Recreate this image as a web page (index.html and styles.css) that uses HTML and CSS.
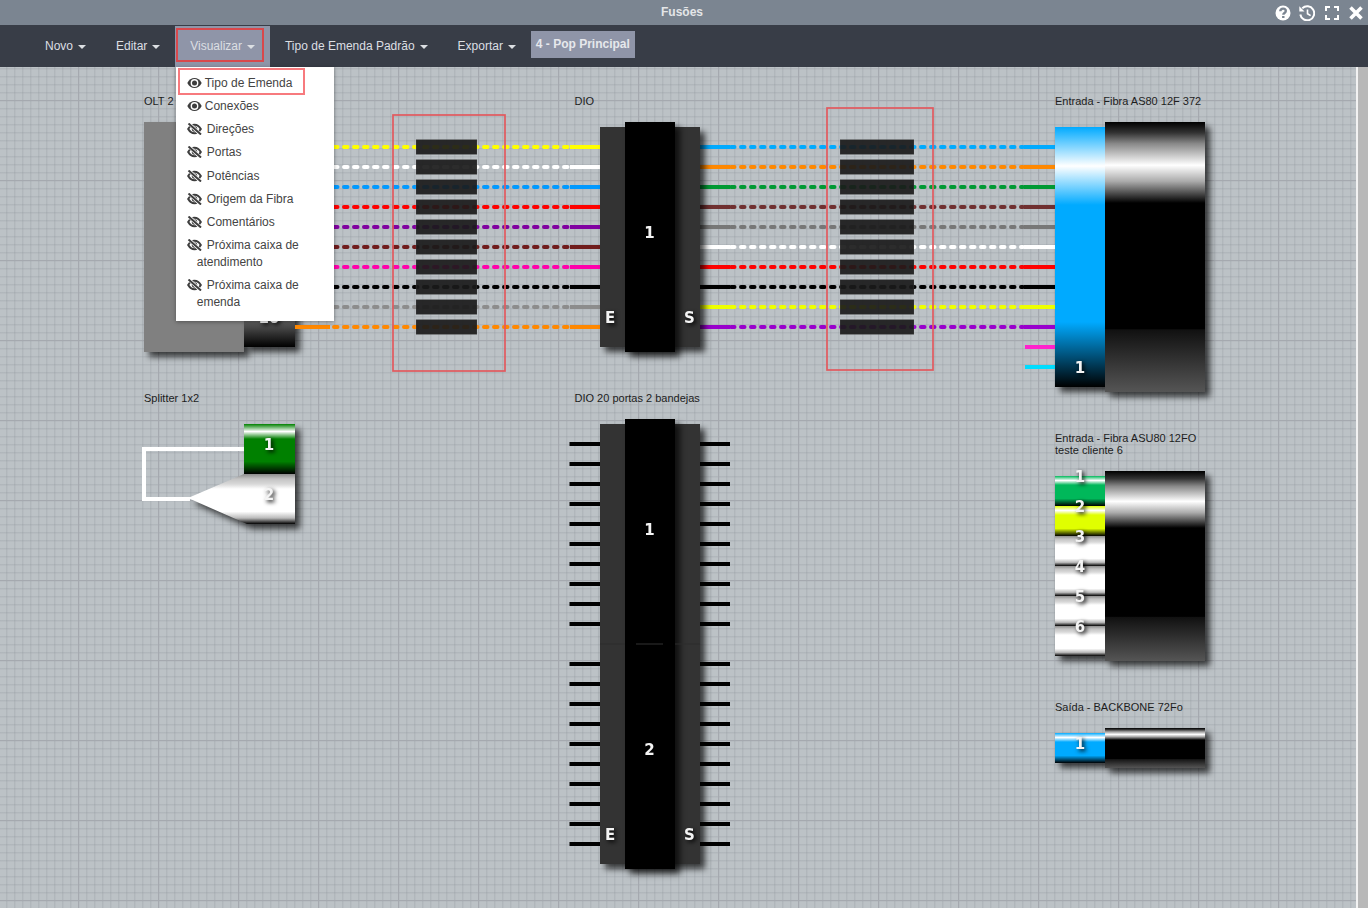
FILE: index.html
```html
<!DOCTYPE html>
<html lang="pt-BR">
<head>
<meta charset="utf-8">
<title>Fusões</title>
<link rel="stylesheet" href="styles.css">
</head>
<body>
<svg class="defs" width="0" height="0" aria-hidden="true">
  <defs>
    <symbol id="i-eye" viewBox="0 0 15 12">
      <path class="ic-fill" d="M.3 6C2 2.8 4.600 1 7.500 1s5.500 1.800 7.200 5c-1.700 3.200-4.300 5-7.200 5S2 9.200.3 6z"/>
      <circle class="ic-white" cx="7.500" cy="6" r="3.900"/>
      <circle class="ic-fill" cx="7.500" cy="6" r="2.500"/>
    </symbol>
    <symbol id="i-slash" viewBox="0 0 15 12">
      <path class="ic-line" d="M1.200 6C2.800 3.200 5 1.800 7.500 1.800S12.200 3.200 13.800 6c-1.600 2.800-3.800 4.200-6.300 4.200S2.800 8.800 1.200 6z"/>
      <path class="ic-fill" d="M7.500 3.200a2.800 2.800 0 1 1-.01 0z"/>
      <path class="ic-halo" d="M2 .5l11.500 11"/>
      <path class="ic-slash" d="M1.500 .5l12.500 11"/>
    </symbol>
    <linearGradient id="g-blue" x1="0" y1="0" x2="0" y2="1">
      <stop offset="0" stop-color="#00aaff"/><stop offset=".15" stop-color="#fff"/><stop offset=".3" stop-color="#00aaff"/><stop offset=".75" stop-color="#00aaff"/><stop offset="1" stop-color="#000"/>
    </linearGradient>
    <linearGradient id="g-green" x1="0" y1="0" x2="0" y2="1">
      <stop offset="0" stop-color="#008000"/><stop offset=".15" stop-color="#fff"/><stop offset=".3" stop-color="#008000"/><stop offset=".75" stop-color="#008000"/><stop offset="1" stop-color="#000"/>
    </linearGradient>
    <linearGradient id="g-mint" x1="0" y1="0" x2="0" y2="1">
      <stop offset="0" stop-color="#00b85a"/><stop offset=".15" stop-color="#fff"/><stop offset=".3" stop-color="#00b85a"/><stop offset=".75" stop-color="#00b85a"/><stop offset="1" stop-color="#000"/>
    </linearGradient>
    <linearGradient id="g-lime" x1="0" y1="0" x2="0" y2="1">
      <stop offset="0" stop-color="#e0ff00"/><stop offset=".15" stop-color="#fff"/><stop offset=".3" stop-color="#e0ff00"/><stop offset=".75" stop-color="#e0ff00"/><stop offset="1" stop-color="#000"/>
    </linearGradient>
    <linearGradient id="g-white" x1="0" y1="0" x2="0" y2="1">
      <stop offset="0" stop-color="#8c8c8c"/><stop offset=".1" stop-color="#c4c4c4"/><stop offset=".2" stop-color="#d8d8d8"/><stop offset=".3" stop-color="#fff"/><stop offset=".75" stop-color="#fff"/><stop offset=".88" stop-color="#bbb"/><stop offset="1" stop-color="#000"/>
    </linearGradient>
    <linearGradient id="g-cable" x1="0" y1="0" x2="0" y2="1">
      <stop offset="0" stop-color="#000"/><stop offset=".04" stop-color="#333"/><stop offset=".08" stop-color="#888"/><stop offset=".16" stop-color="#fff"/><stop offset=".22" stop-color="#aaa"/><stop offset=".3" stop-color="#000"/><stop offset=".765" stop-color="#000"/><stop offset=".77" stop-color="#111"/><stop offset="1" stop-color="#555"/>
    </linearGradient>
    <linearGradient id="g-olt" x1="0" y1="0" x2="0" y2="1">
      <stop offset="0" stop-color="#999"/><stop offset=".4" stop-color="#666"/><stop offset="1" stop-color="#000"/>
    </linearGradient>
  </defs>
</svg>

<header class="titlebar">
  <span></span>
  <h1 class="title">Fusões</h1>
  <div class="win-icons">
    <svg class="win-icon" viewBox="0 0 16 16"><circle class="w-fill" cx="8" cy="8" r="7.500"/><path class="w-q" d="M5.300 6.300C5.300 4.600 6.500 3.600 8 3.600s2.800.9 2.800 2.400c0 1.900-2.500 2-2.500 3.800"/><path class="w-q" d="M8.300 11v2"/></svg>
    <svg class="win-icon win-icon-wide" viewBox="0 0 16 16"><path class="w-line" d="M3.300 3.300A7 7 0 1 1 1.300 9.500"/><path class="w-fill" d="M.3 1.200V6.400H5.500z"/><path class="w-thin" d="M8.500 4.500V8.700L11.600 10.700"/></svg>
    <svg class="win-icon" viewBox="0 0 16 16"><path class="w-line" d="M2 6V2H6M10 2H14V6M14 10V14H10M6 14H2V10"/></svg>
    <svg class="win-icon" viewBox="0 0 16 16"><path class="w-x" d="M2.500 2.500L13.500 13.500M13.500 2.500L2.500 13.500"/></svg>
  </div>
</header>

<nav class="menubar">
  <ul class="menu">
    <li class="menu-item"><a class="menu-link">Novo <span class="caret"></span></a></li>
    <li class="menu-item"><a class="menu-link">Editar <span class="caret"></span></a></li>
    <li class="menu-item is-open">
      <a class="menu-link">Visualizar <span class="caret"></span></a>
      <span class="mark-red"></span>
      <ul class="dropdown">
        <li class="drop-item"><svg class="eye"><use href="#i-eye"/></svg>Tipo de Emenda<span class="mark-pink"></span></li>
        <li class="drop-item"><svg class="eye"><use href="#i-eye"/></svg>Conexões</li>
        <li class="drop-item"><svg class="slash"><use href="#i-slash"/></svg>Direções</li>
        <li class="drop-item"><svg class="slash"><use href="#i-slash"/></svg>Portas</li>
        <li class="drop-item"><svg class="slash"><use href="#i-slash"/></svg>Potências</li>
        <li class="drop-item"><svg class="slash"><use href="#i-slash"/></svg>Origem da Fibra</li>
        <li class="drop-item"><svg class="slash"><use href="#i-slash"/></svg>Comentários</li>
        <li class="drop-item"><svg class="slash"><use href="#i-slash"/></svg>Próxima caixa de atendimento</li>
        <li class="drop-item"><svg class="slash"><use href="#i-slash"/></svg>Próxima caixa de emenda</li>
      </ul>
    </li>
    <li class="menu-item"><a class="menu-link">Tipo de Emenda Padrão <span class="caret"></span></a></li>
    <li class="menu-item"><a class="menu-link">Exportar <span class="caret"></span></a></li>
    <li class="badge">4 - Pop Principal</li>
  </ul>
</nav>

<main class="workspace">
  <svg class="canvas" viewBox="0 67 1356 841" width="1356" height="841">
    <!-- OLT -->
    <text class="label" x="144" y="105">OLT 2</text>
    <rect class="shadow olt" x="144" y="122" width="100" height="230"/>
    <rect class="shadow" fill="url(#g-olt)" x="244" y="300" width="51" height="47"/>
    <text class="num" x="269" y="322">10</text>

    <!-- fibras esquerda -->
    <g class="c-yellow"><path class="solid" d="M295 147H330M570 147H600"/><path class="dash" d="M334 147H570"/></g>
    <g class="c-white"><path class="solid" d="M295 167H330M570 167H600"/><path class="dash" d="M334 167H570"/></g>
    <g class="c-blue"><path class="solid" d="M295 187H330M570 187H600"/><path class="dash" d="M334 187H570"/></g>
    <g class="c-red"><path class="solid" d="M295 207H330M570 207H600"/><path class="dash" d="M334 207H570"/></g>
    <g class="c-purple"><path class="solid" d="M295 227H330M570 227H600"/><path class="dash" d="M334 227H570"/></g>
    <g class="c-maroon"><path class="solid" d="M295 247H330M570 247H600"/><path class="dash" d="M334 247H570"/></g>
    <g class="c-pink"><path class="solid" d="M295 267H330M570 267H600"/><path class="dash" d="M334 267H570"/></g>
    <g class="c-black"><path class="solid" d="M295 287H330M570 287H600"/><path class="dash" d="M334 287H570"/></g>
    <g class="c-gray"><path class="solid" d="M295 307H330M570 307H600"/><path class="dash" d="M334 307H570"/></g>
    <g class="c-orange"><path class="solid" d="M295 327H330M570 327H600"/><path class="dash" d="M334 327H570"/></g>

    <!-- fibras direita -->
    <g class="c-blue2"><path class="solid" d="M700 147H730M1024 147H1055"/><path class="dash" d="M731 147H1023"/></g>
    <g class="c-orange"><path class="solid" d="M700 167H730M1024 167H1055"/><path class="dash" d="M731 167H1023"/></g>
    <g class="c-green"><path class="solid" d="M700 187H730M1024 187H1055"/><path class="dash" d="M731 187H1023"/></g>
    <g class="c-brown"><path class="solid" d="M700 207H730M1024 207H1055"/><path class="dash" d="M731 207H1023"/></g>
    <g class="c-gray2"><path class="solid" d="M700 227H730M1024 227H1055"/><path class="dash" d="M731 227H1023"/></g>
    <g class="c-white"><path class="solid" d="M700 247H730M1024 247H1055"/><path class="dash" d="M731 247H1023"/></g>
    <g class="c-red"><path class="solid" d="M700 267H730M1024 267H1055"/><path class="dash" d="M731 267H1023"/></g>
    <g class="c-black"><path class="solid" d="M700 287H730M1024 287H1055"/><path class="dash" d="M731 287H1023"/></g>
    <g class="c-lime"><path class="solid" d="M700 307H730M1024 307H1055"/><path class="dash" d="M731 307H1023"/></g>
    <g class="c-violet"><path class="solid" d="M700 327H730M1024 327H1055"/><path class="dash" d="M731 327H1023"/></g>
    <g class="c-pink2"><path class="solid" d="M1025 347H1055"/></g>
    <g class="c-cyan"><path class="solid" d="M1025 367H1055"/></g>

    <!-- emendas -->
    <g class="splice">
      <rect x="416" y="139.500" width="61" height="15"/><rect x="416" y="159.500" width="61" height="15"/><rect x="416" y="179.500" width="61" height="15"/><rect x="416" y="199.500" width="61" height="15"/><rect x="416" y="219.500" width="61" height="15"/><rect x="416" y="239.500" width="61" height="15"/><rect x="416" y="259.500" width="61" height="15"/><rect x="416" y="279.500" width="61" height="15"/><rect x="416" y="299.500" width="61" height="15"/><rect x="416" y="319.500" width="61" height="15"/>
      <rect x="840" y="139.500" width="74" height="15"/><rect x="840" y="159.500" width="74" height="15"/><rect x="840" y="179.500" width="74" height="15"/><rect x="840" y="199.500" width="74" height="15"/><rect x="840" y="219.500" width="74" height="15"/><rect x="840" y="239.500" width="74" height="15"/><rect x="840" y="259.500" width="74" height="15"/><rect x="840" y="279.500" width="74" height="15"/><rect x="840" y="299.500" width="74" height="15"/><rect x="840" y="319.500" width="74" height="15"/>
    </g>
    <rect class="select" x="393" y="115" width="112" height="256"/>
    <rect class="select" x="827" y="108" width="106" height="262"/>

    <!-- DIO -->
    <text class="label" x="574.500" y="105">DIO</text>
    <rect class="dio-side shadow" x="600" y="127" width="100" height="220"/>
    <rect class="dio-core shadow" x="625" y="122" width="50" height="230"/>
    <text class="num" x="649.500" y="237">1</text>
    <text class="num" x="610" y="322">E</text>
    <text class="num" x="689.500" y="322">S</text>

    <!-- Entrada AS80 -->
    <text class="label" x="1055" y="105">Entrada - Fibra AS80 12F 372</text>
    <g class="shadow">
      <rect fill="url(#g-blue)" x="1055" y="127" width="50" height="260"/>
      <rect fill="url(#g-cable)" x="1105" y="122" width="100" height="270"/>
    </g>
    <text class="num" x="1080" y="372">1</text>

    <!-- Splitter -->
    <text class="label" x="144" y="402">Splitter 1x2</text>
    <path class="loop" d="M244 449H144V499H190"/>
    <g class="shadow">
      <rect fill="url(#g-green)" x="244" y="424" width="51" height="50"/>
      <path fill="url(#g-white)" d="M295 474V524H247L188 498L244 474z"/>
    </g>
    <text class="num" x="269" y="449">1</text>
    <text class="num" x="269" y="499">2</text>

    <!-- DIO 20 -->
    <text class="label" x="574.500" y="402">DIO 20 portas 2 bandejas</text>
    <path class="ticks" d="M569.500 444H600M569.500 464H600M569.500 484H600M569.500 504H600M569.500 524H600M569.500 544H600M569.500 564H600M569.500 584H600M569.500 604H600M569.500 624H600M569.500 664H600M569.500 684H600M569.500 704H600M569.500 724H600M569.500 744H600M569.500 764H600M569.500 784H600M569.500 804H600M569.500 824H600M569.500 844H600"/>
    <path class="ticks" d="M700 444H730M700 464H730M700 484H730M700 504H730M700 524H730M700 544H730M700 564H730M700 584H730M700 604H730M700 624H730M700 664H730M700 684H730M700 704H730M700 724H730M700 744H730M700 764H730M700 784H730M700 804H730M700 824H730M700 844H730"/>
    <rect class="dio-side shadow" x="600" y="424" width="100" height="440"/>
    <rect class="dio-core shadow" x="625" y="419" width="50" height="450"/>
    <path class="tray-seam" d="M636 644H663"/>
    <path class="side-seam" d="M600 644H625M675 644H700"/>
    <text class="num" x="649.500" y="534">1</text>
    <text class="num" x="649.500" y="754">2</text>
    <text class="num" x="610" y="839">E</text>
    <text class="num" x="689.500" y="839">S</text>

    <!-- Entrada ASU80 -->
    <text class="label" x="1055" y="442">Entrada - Fibra ASU80 12FO</text>
    <text class="label" x="1055" y="454">teste cliente 6</text>
    <g class="shadow">
      <rect fill="url(#g-mint)" x="1055" y="476" width="50" height="30"/>
      <rect fill="url(#g-lime)" x="1055" y="506" width="50" height="30"/>
      <rect fill="url(#g-white)" x="1055" y="536" width="50" height="30"/>
      <rect fill="url(#g-white)" x="1055" y="566" width="50" height="30"/>
      <rect fill="url(#g-white)" x="1055" y="596" width="50" height="30"/>
      <rect fill="url(#g-white)" x="1055" y="626" width="50" height="30"/>
      <rect fill="url(#g-cable)" x="1105" y="471" width="100" height="190"/>
    </g>
    <text class="num" x="1080" y="481">1</text>
    <text class="num" x="1080" y="511">2</text>
    <text class="num" x="1080" y="541">3</text>
    <text class="num" x="1080" y="571">4</text>
    <text class="num" x="1080" y="601">5</text>
    <text class="num" x="1080" y="631">6</text>

    <!-- Saída -->
    <text class="label" x="1055" y="711">Saída - BACKBONE 72Fo</text>
    <g class="shadow">
      <rect fill="url(#g-blue)" x="1055" y="733" width="50" height="30"/>
      <rect fill="url(#g-cable)" x="1105" y="728" width="100" height="40"/>
    </g>
    <text class="num" x="1080" y="748">1</text>
  </svg>
  <div class="scroll-track"></div>
</main>
</body>
</html>
```
FILE: styles.css
```css
* { box-sizing: border-box; }
html, body { height: 100%; margin: 0; }
body {
  display: flex;
  flex-direction: column;
  overflow: hidden;
  font-family: "Liberation Sans", Arial, sans-serif;
  font-size: 12px;
  line-height: 1.42857;
}
.defs { position: absolute; }

/* barra de titulo */
.titlebar {
  display: grid;
  grid-template-columns: 1fr auto 1fr;
  align-items: center;
  height: 25px;
  padding-right: 4px;
  background: #7b8591;
}
.title { margin: 0; padding-top: 1px; font-size: 12px; font-weight: 700; color: #e4e6e8; }
.win-icons { display: flex; justify-self: end; gap: 8px; }
.win-icon { width: 16px; height: 16px; display: block; }
.win-icon-wide { margin-right: 1px; }
.w-fill { fill: #fff; }
.w-q { fill: none; stroke: #7b8591; stroke-width: 2.4; }
.w-line { fill: none; stroke: #fff; stroke-width: 2; }
.w-thin { fill: none; stroke: #fff; stroke-width: 1.6; }
.w-x { fill: none; stroke: #fff; stroke-width: 3.6; }

/* menu */
.menubar {
  height: 42px;
  padding: 1px 0 0 30px;
  background: #383d47;
}
.menu { display: flex; margin: 0; padding: 0; list-style: none; }
.menu-item { position: relative; height: 41px; }
.menu-link {
  display: block;
  height: 41px;
  padding: 12px 15px 0;
  color: #dcdfe3;
  white-space: nowrap;
}
.is-open { background: #8f95a8; }
.caret {
  display: inline-block;
  width: 0;
  height: 0;
  margin-left: 1.600px;
  vertical-align: middle;
  border-top: 4px solid #dcdfe3;
  border-left: 4px solid transparent;
  border-right: 4px solid transparent;
}
.badge {
  align-self: flex-start;
  margin-top: 5px;
  padding: 5px;
  font-weight: 700;
  color: #e6e8ec;
  background: #8f95a8;
}
.mark-red {
  position: absolute;
  left: 1px;
  top: 2px;
  width: 88px;
  height: 34px;
  border: 2px solid #d9484c;
}

/* dropdown */
.dropdown {
  position: absolute;
  left: 1px;
  top: 41px;
  z-index: 5;
  width: 158px;
  margin: 0;
  padding: 5px 0 6px;
  list-style: none;
  background: #fff;
  box-shadow: 0 1px 4px rgba(0, 0, 0, .35);
}
.drop-item {
  position: relative;
  padding: 3px 20px 3px 20.500px;
  text-indent: -10px;
  color: #444;
}
.drop-item svg { vertical-align: -2px; height: 12px; width: 15px; }
.eye { margin-right: 3px; }
.slash { margin-right: 5px; }
.ic-fill { fill: #3d3d3d; }
.ic-white { fill: #fff; }
.ic-line { fill: none; stroke: #3d3d3d; stroke-width: 2; }
.ic-halo { fill: none; stroke: #fff; stroke-width: 3.4; }
.ic-slash { fill: none; stroke: #3d3d3d; stroke-width: 2; }
.mark-pink {
  position: absolute;
  left: 2px;
  top: -4px;
  width: 127px;
  height: 27px;
  border: 2px solid #f77a7e;
}

/* area de trabalho */
.workspace { display: flex; flex: 1; min-height: 0; }
.canvas {
  display: block;
  flex: none;
  background-color: #bcc2c6;
  background-image:
    linear-gradient(90deg, #a5a9af 1px, transparent 1px),
    linear-gradient(#a5a9af 1px, transparent 1px),
    linear-gradient(90deg, rgba(140, 146, 152, .24) 1px, transparent 2px),
    linear-gradient(rgba(140, 146, 152, .24) 1px, transparent 2px);
  background-size: 80px 80px, 80px 80px, 8px 8px, 8px 8px;
  background-position: 78px 0, 0 33px, 6px 0, 0 1px;
}
.scroll-track {
  flex: 1;
  background: #b8b8b8;
  border-left: 2px solid #f2f2f2;
}

/* diagrama */
.label { font: 11px "Liberation Sans", Arial, sans-serif; fill: #1d1d1d; }
.num {
  font: 700 15px "DejaVu Sans", sans-serif;
  fill: #f4f4f4;
  text-anchor: middle;
  transform: translateY(1px);
  filter: drop-shadow(2px 2px 2px rgba(0, 0, 0, .95));
}
.shadow { filter: drop-shadow(5px 5px 3px rgba(0, 0, 0, .7)); }
.olt { fill: #808080; }
.dio-side { fill: #333; }
.dio-core { fill: #000; }
.tray-seam { fill: none; stroke: #222; stroke-width: 1.500; }
.side-seam { fill: none; stroke: #2c2c2c; stroke-width: 1; }
.ticks { fill: none; stroke: #000; stroke-width: 4; }
.loop { fill: none; stroke: #fff; stroke-width: 4; }
.solid { fill: none; stroke-width: 4; }
.dash { fill: none; stroke-width: 4; stroke-linecap: round; stroke-dasharray: 3.500 6.500; }
.splice rect { fill: #1a1a1a; fill-opacity: .92; stroke: #c8ccd0; stroke-opacity: .12; }
.select { fill: none; stroke: #e25a5e; stroke-width: 1.700; }

.c-yellow { stroke: #ffff00; }
.c-white { stroke: #fff; }
.c-blue { stroke: #0099ff; }
.c-blue2 { stroke: #00aaff; }
.c-red { stroke: #ff0000; }
.c-purple { stroke: #8000a0; }
.c-maroon { stroke: #701c1c; }
.c-pink { stroke: #ff00aa; }
.c-pink2 { stroke: #ff22cc; }
.c-black { stroke: #000; }
.c-gray { stroke: #8c8c8c; }
.c-gray2 { stroke: #777; }
.c-orange { stroke: #ff8800; }
.c-green { stroke: #009933; }
.c-brown { stroke: #703030; }
.c-lime { stroke: #eeff00; }
.c-violet { stroke: #9900cc; }
.c-cyan { stroke: #00ddff; }
```
